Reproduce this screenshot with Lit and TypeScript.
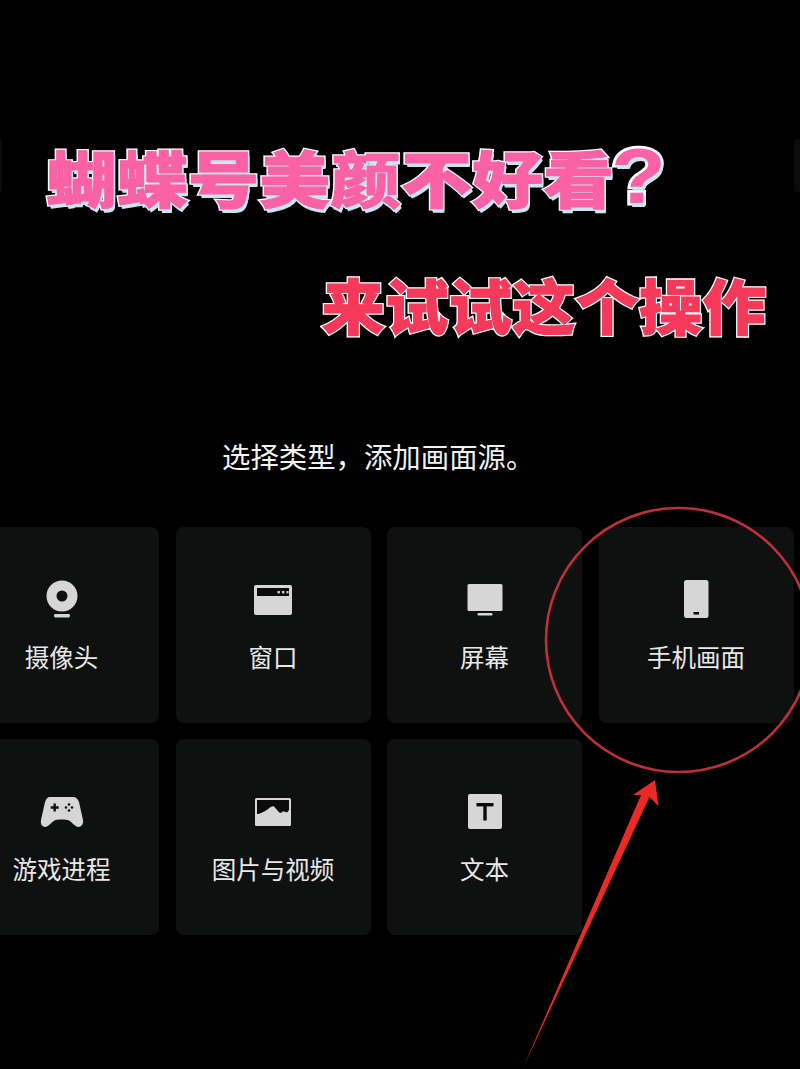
import { LitElement, html, css, svg } from "lit";
import { customElement } from "lit/decorators.js";

const ICONS = {
  camera: svg`<svg class="icon" width="44" height="44" viewBox="0 0 44 44"><circle cx="22" cy="18" r="10.500" fill="none" stroke="#d6d6d6" stroke-width="10"/><rect x="14" y="36" width="16" height="3.400" rx="1.400" fill="#d6d6d6"/></svg>`,
  window: svg`<svg class="icon" width="44" height="44" viewBox="0 0 44 44"><rect x="3" y="7" width="38" height="30" rx="2" fill="#d6d6d6"/><rect x="6" y="10" width="32" height="8" fill="#0b0b0b"/><rect x="26.500" y="13" width="2.400" height="2.400" fill="#d6d6d6"/><rect x="31" y="13" width="2.400" height="2.400" fill="#d6d6d6"/><rect x="35.500" y="13" width="2" height="2.400" fill="#d6d6d6"/></svg>`,
  screen: svg`<svg class="icon" width="44" height="44" viewBox="0 0 44 44"><rect x="4.500" y="6" width="35" height="27" rx="1.500" fill="#d6d6d6"/><rect x="14.500" y="35" width="15" height="2.600" rx="1.300" fill="#d6d6d6"/></svg>`,
  phone: svg`<svg class="icon" width="44" height="44" viewBox="0 0 44 44"><rect x="10" y="2" width="24.500" height="38" rx="2.500" fill="#d6d6d6"/><rect x="19.500" y="34" width="5.500" height="2.500" fill="#0b0b0b"/></svg>`,
  game: svg`<svg class="icon" width="44" height="44" viewBox="0 0 44 44"><path d="M10 7H33C36 7 38 9 39 12L43 30C44 35 40 38 36.500 36.500C34 35.500 32 32 29 30.500C26 29.300 17 29.300 14.500 30.500C11.500 32 9.500 35.500 7 36.500C3.500 38 0 35 1 30L5 12C6 9 7.500 7 10 7Z" fill="#d6d6d6"/><path d="M13.500 13.500h2.400v2.800h2.800v2.400h-2.800v2.800h-2.400v-2.800h-2.800v-2.400h2.800z" fill="#111"/><g fill="#111"><circle cx="29" cy="14.500" r="1.300"/><circle cx="29" cy="20.500" r="1.300"/><circle cx="26" cy="17.500" r="1.300"/><circle cx="32" cy="17.500" r="1.300"/></g></svg>`,
  image: svg`<svg class="icon" width="44" height="44" viewBox="0 0 44 44"><rect x="4" y="8" width="36" height="28" rx="1.500" fill="#d6d6d6"/><path d="M6 10H38V20L36 22.500C34 21.500 32 20.500 30 23C28 23.500 25 18 23 16.500C20 15.500 18 19 15 20.500C12 22 9 24 6 24Z" fill="#0b0b0b"/></svg>`,
  text: svg`<svg class="icon" width="44" height="44" viewBox="0 0 44 44"><rect x="5" y="4" width="34" height="35" rx="2" fill="#d6d6d6"/><rect x="13.500" y="13" width="17" height="3.400" fill="#0b0b0b"/><rect x="20.300" y="13" width="3.400" height="17.500" fill="#0b0b0b"/></svg>`,
};

const ITEMS: [keyof typeof ICONS, string][] = [
  ["camera", "摄像头"],
  ["window", "窗口"],
  ["screen", "屏幕"],
  ["phone", "手机画面"],
  ["game", "游戏进程"],
  ["image", "图片与视频"],
  ["text", "文本"],
];

@customElement("app-root")
export class AppRoot extends LitElement {
  static styles = css`
    :host {
      display: block;
      position: relative;
      width: 800px;
      height: 1069px;
      overflow: hidden;
      background: #000;
      font-family: "Noto Sans CJK SC", "Noto Sans", sans-serif;
      color: #fff;
    }
    .page {
      display: flex;
      flex-direction: column;
      padding-top: 134px;
    }
    .title {
      position: relative;
      font-weight: 900;
      white-space: nowrap;
      paint-order: stroke fill;
    }
    .title::after {
      content: attr(data-text);
      position: absolute;
      left: 0;
      top: 0;
      text-shadow: none;
    }
    .pink {
      margin-left: 46px;
      height: 84px;
      line-height: 84px;
      font-size: 71px;
      color: #fb62a6;
      transform: scaleY(0.86);
      transform-origin: left center;
      -webkit-text-stroke: 4px #fff;
      text-shadow: 0 1px #c9e6f0, 1px 2px #c9e6f0, 1px 3px #c9e6f0, 2px 4px #c9e6f0, 2px 5px #c9e6f0;
    }
    .pink::after {
      -webkit-text-stroke: 1px #fb62a6;
    }
    .qm {
      display: inline-block;
      font-family: "Liberation Sans", sans-serif;
      font-weight: 700;
      font-size: 90px;
      line-height: 70px;
      margin-left: -3px;
      -webkit-text-stroke: 6px #fff;
    }
    .red {
      margin-top: 45px;
      align-self: flex-end;
      margin-right: 34px;
      height: 84px;
      line-height: 84px;
      font-size: 63.500px;
      color: #f5395a;
      transform: scaleY(0.95);
      transform-origin: center top;
      -webkit-text-stroke: 3.500px #fff;
    }
    .red::after {
      -webkit-text-stroke: 0.800px #f5395a;
    }
    .hint {
      margin-top: 89px;
      padding-left: 222px;
      height: 40px;
      line-height: 40px;
      font-size: 28.400px;
      color: #f2f2f2;
    }
    .grid {
      margin-top: 51px;
      margin-left: -36px;
      display: grid;
      grid-template-columns: repeat(4, 195px);
      grid-auto-rows: 195.500px;
      column-gap: 16.500px;
      row-gap: 16.500px;
    }
    .card {
      display: flex;
      flex-direction: column;
      align-items: center;
      padding-top: 51px;
      box-sizing: border-box;
      background: #0f1010;
      border-radius: 8px;
    }
    .icon {
      display: block;
      flex: none;
    }
    .label {
      margin-top: 19px;
      height: 32px;
      line-height: 32px;
      font-size: 24.500px;
      color: #e8e8e8;
    }
    .overlay {
      position: absolute;
      left: 0;
      top: 0;
      pointer-events: none;
    }
    .ghost {
      fill: #0c0c0c;
    }
  `;

  render() {
    return html`
      <div class="page">
        <div class="title pink" data-text="蝴蝶号美颜不好看">蝴蝶号美颜不好看<span class="qm">?</span></div>
        <div class="title red" data-text="来试试这个操作">来试试这个操作</div>
        <div class="hint">选择类型，添加画面源。</div>
        <div class="grid">
          ${ITEMS.map(
            ([icon, label]) => html`
              <div class="card">
                ${ICONS[icon]}
                <div class="label">${label}</div>
              </div>
            `
          )}
        </div>
      </div>
      <svg class="overlay" width="800" height="1069" viewBox="0 0 800 1069">
        <rect class="ghost" x="794" y="139" width="10" height="53" rx="3"/>
        <rect class="ghost" x="-8" y="139" width="10" height="53" rx="3"/>
        <ellipse cx="678.500" cy="640" rx="132.500" ry="132" fill="none" stroke="#bd303c" stroke-width="2.600"/>
        <polygon points="655,780 658.500,806 649.500,797 523,1068 641,795 633,795" fill="#ea2a25"/>
      </svg>
    `;
  }
}
